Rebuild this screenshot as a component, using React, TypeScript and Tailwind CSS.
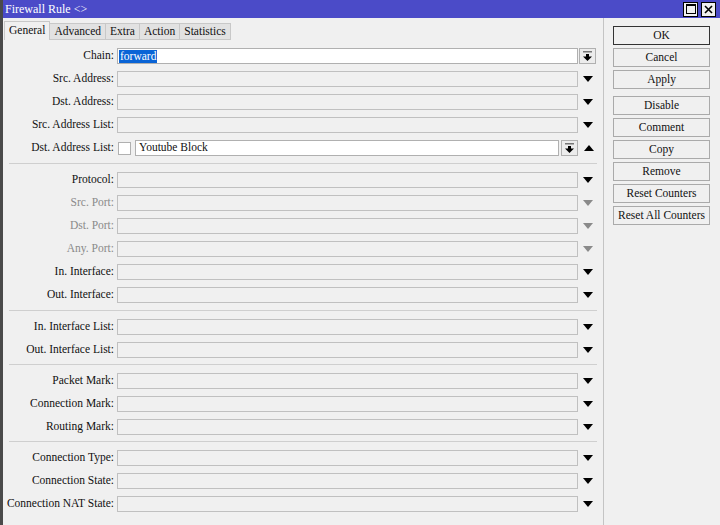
import React from "react";

type Row = { label: string; kind?: "chain" | "list" | "plain"; disabled?: boolean };

const sections: Row[][] = [
  [
    { label: "Chain:", kind: "chain" },
    { label: "Src. Address:" },
    { label: "Dst. Address:" },
    { label: "Src. Address List:" },
    { label: "Dst. Address List:", kind: "list" },
  ],
  [
    { label: "Protocol:" },
    { label: "Src. Port:", disabled: true },
    { label: "Dst. Port:", disabled: true },
    { label: "Any. Port:", disabled: true },
    { label: "In. Interface:" },
    { label: "Out. Interface:" },
  ],
  [{ label: "In. Interface List:" }, { label: "Out. Interface List:" }],
  [{ label: "Packet Mark:" }, { label: "Connection Mark:" }, { label: "Routing Mark:" }],
  [{ label: "Connection Type:" }, { label: "Connection State:" }, { label: "Connection NAT State:" }],
];

const tabs = ["General", "Advanced", "Extra", "Action", "Statistics"];

const buttons = [
  ["OK", "Cancel", "Apply"],
  ["Disable", "Comment", "Copy", "Remove", "Reset Counters", "Reset All Counters"],
];

function Triangle({ up, gray }: { up?: boolean; gray?: boolean }) {
  return (
    <svg width="10" height="6" viewBox="0 0 10 6">
      <polygon points={up ? "0,6 10,6 5,0" : "0,0 10,0 5,6"} fill={gray ? "#8a8a8a" : "#000"} />
    </svg>
  );
}

function DropButton() {
  return (
    <div className="flex h-[16px] w-[17px] items-center justify-center border border-[#b0b0b0] bg-[#ececec]">
      <svg width="9" height="10" viewBox="0 0 9 10">
        <rect x="0" y="0" width="9" height="1.5" fill="#777" />
        <rect x="3" y="3" width="3" height="3" fill="#000" />
        <polygon points="0,5.5 9,5.5 4.5,10" fill="#000" />
      </svg>
    </div>
  );
}

function FormRow({ row }: { row: Row }) {
  return (
    <div className="flex h-[16px] items-center">
      <div
        className={`w-[111px] shrink-0 whitespace-nowrap text-right ${
          row.disabled ? "text-[#8a8a8a]" : "text-[#111]"
        }`}
      >
        {row.label}
      </div>
      {row.kind === "chain" ? (
        <>
          <div className="ml-[3px] flex h-[16px] w-[461px] items-center border border-[#b0b0b0] bg-white px-[1px]">
            <span className="bg-[#0a64d6] px-[1px] leading-[13px] text-white">forward</span>
          </div>
          <div className="ml-[1px]">
            <DropButton />
          </div>
        </>
      ) : row.kind === "list" ? (
        <>
          <div className="ml-[4px] h-[13px] w-[13px] border border-[#b0b0b0] bg-white" />
          <div className="ml-[4px] flex h-[16px] w-[424px] items-center border border-[#b0b0b0] bg-white px-[3px]">
            Youtube Block
          </div>
          <div className="ml-[2px]">
            <DropButton />
          </div>
          <div className="flex w-[20px] justify-center pl-[2px]">
            <Triangle up />
          </div>
        </>
      ) : (
        <>
          <div className="ml-[3px] h-[16px] w-[461px] border border-[#c0c0c0] bg-[#f0f0f0]" />
          <div className="flex w-[20px] justify-center">
            <Triangle gray={row.disabled} />
          </div>
        </>
      )}
    </div>
  );
}

export default function App() {
  return (
    <div
      className="flex h-[525px] w-[720px] flex-col overflow-hidden border-l-[3px] border-[#4a4a4a] bg-[#f0f0f0] text-[11.5px] text-[#111]"
      style={{ fontFamily: '"Liberation Serif", serif' }}
    >
      {/* Title bar */}
      <div className="flex h-[18px] shrink-0 items-center justify-between bg-[#4b4bc8] pl-[2px] pr-[4px] text-[12px] text-white">
        <span>Firewall Rule &lt;&gt;</span>
        <div className="flex gap-[3px]">
          <div className="flex h-[15px] w-[15px] items-center justify-center border border-black bg-[#f0f0f0]">
            <div className="h-[10px] w-[10px] border border-t-[2px] border-black" />
          </div>
          <div className="flex h-[15px] w-[15px] items-center justify-center border border-black bg-[#f0f0f0]">
            <svg width="9" height="9" viewBox="0 0 9 9">
              <path d="M1 1 L8 8 M8 1 L1 8" stroke="#000" strokeWidth="1.6" />
            </svg>
          </div>
        </div>
      </div>

      <div className="flex flex-1">
        {/* Left: tabs and form */}
        <div className="flex w-[601px] flex-col border-r border-[#c4c4c4]">
          <div className="mt-[3px] flex h-[19px] items-end pl-[1px]">
            {tabs.map((t, i) => (
              <div
                key={t}
                className={
                  i === 0
                    ? "flex h-[19px] items-center border border-b-0 border-[#c8c8c8] bg-[#f0f0f0] px-[4px]"
                    : "flex h-[17px] items-center border border-l-0 border-[#c8c8c8] bg-[#e2e2e2] px-[4px]"
                }
              >
                {t}
              </div>
            ))}
          </div>

          <div className="flex flex-col pt-[8px]">
            {sections.map((sec, si) => (
              <div key={si}>
                {si > 0 ? (
                  <div className={`mx-[6px] mb-[8px] h-px bg-[#cfcfcf] ${si < 3 ? "mt-[7px]" : "mt-[6px]"}`} />
                ) : null}
                <div className="flex flex-col gap-[7px]">
                  {sec.map((r) => (
                    <FormRow key={r.label} row={r} />
                  ))}
                </div>
              </div>
            ))}
          </div>
        </div>

        {/* Right: buttons */}
        <div className="flex flex-1 flex-col gap-[7px] pl-[9px] pt-[8px]">
          {buttons.map((grp, gi) => (
            <div key={gi} className="flex flex-col gap-[3px]">
              {grp.map((b) => (
                <div
                  key={b}
                  className={`flex h-[19px] w-[97px] items-center justify-center bg-[#f0f0f0] ${
                    b === "OK" ? "border border-[#333]" : "border border-[#aaaaaa]"
                  }`}
                >
                  {b}
                </div>
              ))}
            </div>
          ))}
        </div>
      </div>
    </div>
  );
}
